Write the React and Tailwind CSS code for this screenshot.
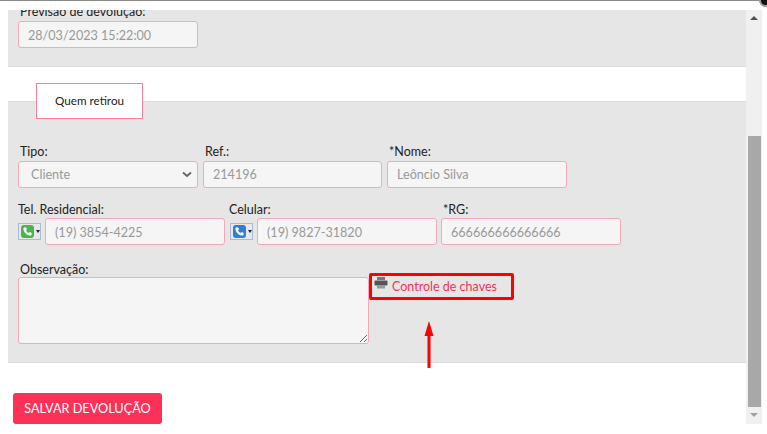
import { Phone } from "lucide-react";

const Field = ({ label, value, width, labelClass = "" }) => (
  <div className={width}>
    <label className={`block text-[12.5px] leading-[16px] text-[#222] ${labelClass}`}>{label}</label>
    <input
      readOnly
      value={value}
      className="w-full h-[27px] px-[9px] bg-[#f5f5f5] border border-[#f5a8b8] rounded-[3px] text-[12.6px] text-[#999] outline-none"
    />
  </div>
);

const PhoneSelect = ({ color, className = "" }) => (
  <div className={`w-[23px] h-[17px] mt-[5px] border border-[#a9bcd6] bg-[#e8e8e8] flex items-center shrink-0 ${className}`}>
    <span className={`w-[13px] h-[13px] ml-[2px] rounded-[3px] flex items-center justify-center ${color}`}>
      <Phone size={9} color="white" fill="white" />
    </span>
    <span className="ml-[2px] w-0 h-0 border-x-[2px] border-x-transparent border-t-[3px] border-t-[#222]" />
  </div>
);

const PhoneField = ({ label, value, color, selectClass }) => (
  <div>
    <label className="block text-[12.5px] leading-[16px] text-[#222]">{label}</label>
    <div className="flex gap-[4px]">
      <PhoneSelect color={color} className={selectClass} />
      <input
        readOnly
        value={value}
        className="w-[180px] h-[27px] px-[9px] pt-[1px] bg-[#f5f5f5] border border-[#f5a8b8] rounded-[3px] text-[12.6px] text-[#999] outline-none"
      />
    </div>
  </div>
);

const App = () => {
  return (
    <div className="relative w-[767px] h-[434px] overflow-hidden bg-white font-['Lato','Noto_Sans',sans-serif]">
      <div className="h-[1px] bg-[#8a8a8a] mr-[6px]" />

      {/* corner of the close button */}
      <div className="absolute -top-[6px] right-[-5px] w-[13px] h-[13px] rounded-full bg-[#111] border-2 border-[#999]" />

      <div className="flex mt-[9px] ml-[8px] h-[414px]">
        <div className="w-[738px] overflow-hidden">
          {/* Previsao */}
          <div className="h-[57px] bg-[#e6e6e6] border-b border-[#dcdcdc] pl-[10px] relative overflow-hidden">
            <label className="absolute -top-[6px] left-[12px] text-[12.5px] leading-[16px] text-[#222]">
              Previsão de devolução:
            </label>
            <input
              readOnly
              value="28/03/2023 15:22:00"
              className="mt-[11px] w-[180px] h-[27px] px-[9px] pt-[1px] bg-[#f5f5f5] border border-[#f5a8b8] rounded-[3px] text-[12.6px] text-[#999] outline-none"
            />
          </div>

          {/* Quem retirou */}
          <div className="mt-[34px] h-[262px] bg-[#e6e6e6] border-t border-b border-[#dcdcdc] pl-[10px] relative">
            <div className="absolute -top-[19px] left-[28px] w-[107px] h-[36px] bg-white border border-[#fb7f99] flex items-center justify-center text-[11.7px] text-[#222]">
              Quem retirou
            </div>

            <div className="flex gap-[5px] pt-[42px]">
              <div className="w-[180px]">
                <label className="block pl-[2px] text-[12.5px] leading-[16px] text-[#222]">Tipo:</label>
                <div className="relative mt-[1px] w-full h-[27px] pl-[12px] pt-[1px] flex items-center bg-[#f5f5f5] border border-[#f5a8b8] rounded-[3px] text-[12.6px] text-[#999]">
                  Cliente
                  <svg className="absolute right-[5px] top-[9px]" width="10" height="7" viewBox="0 0 10 7">
                    <path d="M1 1.5 L5 5 L9 1.5" fill="none" stroke="#666" strokeWidth="1.8" />
                  </svg>
                </div>
              </div>
              <Field label="Ref.:" value="214196" width="w-[179px] [&>input]:mt-[1px]" labelClass="pl-[2px]" />
              <Field label="*Nome:" value="Leôncio Silva" width="w-[180px] [&>input]:mt-[1px]" labelClass="pl-[2px]" />
            </div>

            <div className="flex gap-[4px] mt-[14px]">
              <PhoneField label="Tel. Residencial:" value="(19) 3854-4225" color="bg-[#4cb34f]" />
              <PhoneField label="Celular:" value="(19) 9827-31820" color="bg-[#2f7fd6]" selectClass="ml-[1px]" />
              <Field label="*RG:" value="666666666666666" width="w-[180px] [&>input]:pt-[1px]" labelClass="pl-[2px]" />
            </div>

            <div className="flex mt-[17px]">
              <div>
                <label className="block pl-[2px] text-[12.5px] leading-[16px] text-[#222]">Observação:</label>
                <textarea
                  readOnly
                  className="block -mt-[1px] w-[351px] h-[67px] bg-[#f5f5f5] border border-[#f5a8b8] rounded-[3px] outline-none"
                />
              </div>
              <div className="flex items-start ml-[5px] mt-[15px] text-[12.5px] leading-[16px] text-[#fb2f57]">
                <svg className="mt-[-1px]" width="14" height="14" viewBox="0 0 14 14">
                  <rect x="3" y="1" width="8" height="3" fill="#777" />
                  <rect x="0.5" y="4.5" width="13" height="5" rx="1" fill="#555" />
                  <rect x="3" y="9" width="8" height="3.5" fill="#999" />
                </svg>
                <span className="ml-[4px] mt-[2px]">Controle de chaves</span>
              </div>
            </div>
          </div>

          <button className="mt-[30px] ml-[5px] w-[149px] h-[31px] bg-[#fb3158] rounded-[3px] text-white text-[12.7px]">
            SALVAR DEVOLUÇÃO
          </button>
        </div>

        {/* scrollbar */}
        <div className="w-[16px] bg-[#f0f0f0] flex flex-col items-center">
          <span className="mt-[6px] w-0 h-0 border-x-[4px] border-x-transparent border-b-[4px] border-b-[#505050]" />
          <div className="mt-[116px] w-[13px] h-[271px] bg-[#a8a8a8]" />
          <span className="mt-[6px] w-0 h-0 border-x-[4px] border-x-transparent border-t-[4px] border-t-[#a0a0a0]" />
        </div>
      </div>

      {/* annotation */}
      <div className="absolute left-[369px] top-[273px] w-[145px] h-[27px] border-[3px] border-[#f00] rounded-[2px]" />
      <svg className="absolute left-[420px] top-[320px]" width="18" height="50" viewBox="0 0 18 50">
        <path d="M9 1 L13.5 16 L10.5 16 L10.5 48 L7.5 48 L7.5 16 L4.5 16 Z" fill="#f00" />
      </svg>
    </div>
  );
};

export default App;
